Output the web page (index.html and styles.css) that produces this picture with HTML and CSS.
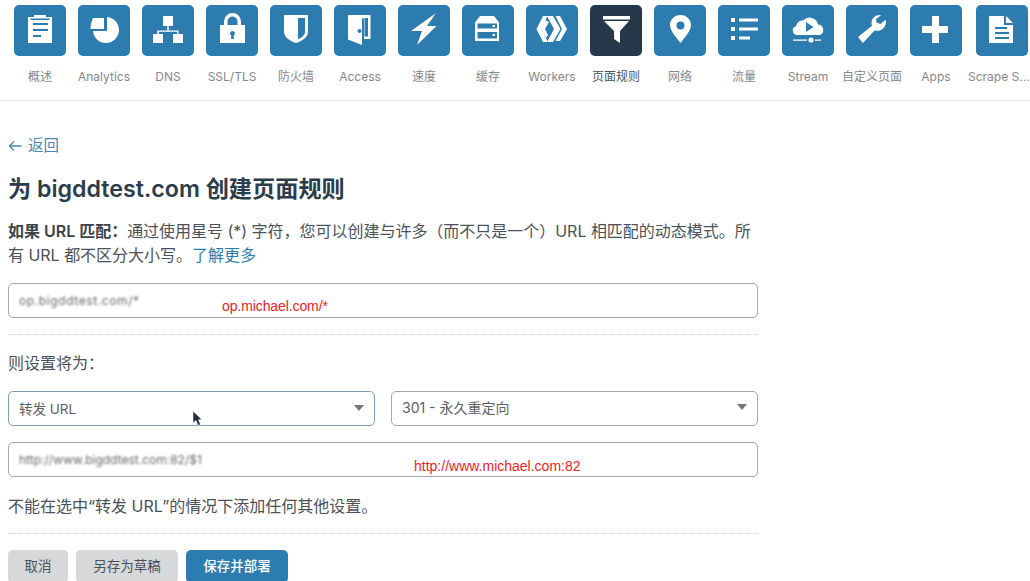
FILE: index.html
```html
<!DOCTYPE html>
<html lang="zh-CN">
<head>
<meta charset="utf-8">
<title>页面规则</title>
<link rel="stylesheet" href="styles.css">
</head>
<body>
<nav class="nav">
  <a class="tab"><span class="tile"><svg viewBox="0 0 52 51"><path class="w" d="M20 10h12v2h6v26H14V12h6z"/><path class="b" d="M16.500 13.500h19v1.500h-19zM19 18h15v2H19zM19 24h15v2H19zM19 30h8v2h-8z"/></svg></span><span class="lbl">概述</span></a>
  <a class="tab"><span class="tile"><svg viewBox="0 0 52 51"><path class="w" d="M15 13h11v11H12.500c0-4 1-8 2.500-11zM29 12a13 13 0 1 1-14 14h14z"/></svg></span><span class="lbl">Analytics</span></a>
  <a class="tab"><span class="tile"><svg viewBox="0 0 52 51"><path class="w" d="M21 11h10v10h-4.300v4.500H36.500V29H41v9H31v-9h4.200v-2.200H16.800V29H21v9H11v-9h4.200v-3.500h10.100V21H21z"/></svg></span><span class="lbl">DNS</span></a>
  <a class="tab"><span class="tile"><svg viewBox="0 0 52 51"><path class="w" d="M14 20h4v-3.500a8.500 8.500 0 0 1 17 0V20h4v18H14zM21.500 20h10v-3.500a5 5 0 0 0-10 0z"/><path class="b" d="M26.500 26a2.500 2.500 0 0 1 1.300 4.600V34h-2.600v-3.400a2.500 2.500 0 0 1 1.300-4.600z"/></svg></span><span class="lbl">SSL/TLS</span></a>
  <a class="tab"><span class="tile"><svg viewBox="0 0 52 51"><path class="w" d="M14 10h24v17c0 5-6 9-12 11-6-2-12-6-12-11z"/><path class="b" d="M28 13h7v14c0 3-3 5.500-7 7.300z"/></svg></span><span class="lbl">防火墙</span></a>
  <a class="tab"><span class="tile"><svg viewBox="0 0 52 51"><path class="w" d="M14 10h22.500v24H30V14l-2-1v27l-14-5.500z"/><path class="b" d="M30.500 13h3.500v18.500h-3.500z"/><circle class="b" cx="25.500" cy="26" r="2"/></svg></span><span class="lbl">Access</span></a>
  <a class="tab"><span class="tile"><svg viewBox="0 0 52 51"><path class="w" d="M38 8L29 21h9.500L19 40l5-14H13z"/></svg></span><span class="lbl">速度</span></a>
  <a class="tab"><span class="tile"><svg viewBox="0 0 52 51"><path class="w" d="M18 11h14l5 6.500V36H13V17.500z"/><path class="b" d="M15.500 18.500H35v5H15.500zM15.500 27H35v6.500H15.500z"/><path class="w" d="M30.500 20h2.500v2h-2.500zM30.500 29h2.500v2h-2.500z"/></svg></span><span class="lbl">缓存</span></a>
  <a class="tab"><span class="tile"><svg viewBox="0 0 52 51"><path class="w" d="M17 11h4.500L15 24l7 13h-5L10.500 24zM21 11h6l7.500 13L27 37h-6l7-13zM29.500 11H34l7 13-7 12h-4.500l6.500-12z"/><path class="w" d="M19 15l4 2-4 7 3 6-2 3-5-9z"/></svg></span><span class="lbl">Workers</span></a>
  <a class="tab on"><span class="tile"><svg viewBox="0 0 52 51"><path class="w" d="M13 11h27v3.500H13zM14 16h25l-9 10v12l-6-4v-8z"/></svg></span><span class="lbl">页面规则</span></a>
  <a class="tab"><span class="tile"><svg viewBox="0 0 52 51"><path class="w" d="M26.500 10c6 0 10.500 4.500 10.500 10 0 6-6 12-10.500 18C22 32 16 26 16 20c0-5.500 4.500-10 10.500-10zm0 6.500a4 4 0 1 0 0 8 4 4 0 0 0 0-8z"/></svg></span><span class="lbl">网络</span></a>
  <a class="tab"><span class="tile"><svg viewBox="0 0 52 51"><path class="w" d="M13 13h4v4h-4zM21 13.500h19v3H21zM13 22h4v4h-4zM21 22.500h19v3H21zM13 31h4v4h-4zM21 31.500h11v3H21z"/></svg></span><span class="lbl">流量</span></a>
  <a class="tab"><span class="tile"><svg viewBox="0 0 52 51"><path class="w" d="M15.500 30a4.500 4.500 0 0 1-1.500-8.800 7 7 0 0 1 7.500-6A8.500 8.500 0 0 1 36 19.500a5.500 5.500 0 0 1 2 10.500z"/><path class="b" d="M24 17l7.500 5-7.500 5z"/><path class="w" d="M11 34.500h14v1.200H11zM33 34.500h6v1.200h-6z"/><circle class="w" cx="29" cy="35" r="2.600"/></svg></span><span class="lbl">Stream</span></a>
  <a class="tab"><span class="tile"><svg viewBox="0 0 52 51"><path class="w" d="M34 10c-5 0-8.500 3.500-8.500 8 0 1 .2 2 .5 2.800L12 32l5 6 11.500-12.500c5.500 1.500 11.500-2.500 11.500-8.500 0-.8-.2-1.500-.5-2.200L34.500 19l-4-1.500-.5-3.500 5-3.500z"/></svg></span><span class="lbl">自定义页面</span></a>
  <a class="tab"><span class="tile"><svg viewBox="0 0 52 51"><path class="w" d="M22 11h7v10h9v7h-9v10h-7V28H12v-7h10z"/></svg></span><span class="lbl">Apps</span></a>
  <a class="tab"><span class="tile"><svg viewBox="0 0 52 51"><path class="w" d="M13 11h15v9h9v18H13z"/><path class="w" d="M30 11l7 7h-7z"/><path class="b" d="M19 22h12v2H19zM19 27h14v2H19zM19 32h14v2H19z"/></svg></span><span class="lbl">Scrape S...</span></a>
</nav>

<main class="main">
  <a class="back"><svg class="back-ico" viewBox="0 0 14 12"><path d="M6 1.500L1.500 6 6 10.500M1.500 6H13.500"/></svg>返回</a>
  <h1 class="title">为 bigddtest.com 创建页面规则</h1>
  <p class="intro"><strong>如果 URL 匹配：</strong>通过使用星号 (*) 字符，您可以创建与许多（而不只是一个）URL 相匹配的动态模式。所有 URL 都不区分大小写。<a class="link">了解更多</a></p>
  <div class="field"><span class="smudge s1">op.bigddtest.com/*</span><span class="mark m1">op.michael.com/*</span></div>
  <hr class="rule r1">
  <p class="then">则设置将为：</p>
  <div class="row">
    <div class="field sel focus"><span class="val">转发 URL</span><i class="arrow"></i></div>
    <div class="field sel second"><span class="val">301 - 永久重定向</span><i class="arrow"></i></div>
  </div>
  <div class="field f2"><span class="smudge s2">http://www.bigddtest.com:82/$1</span><span class="mark m2">http://www.michael.com:82</span></div>
  <p class="note">不能在选中“转发 URL”的情况下添加任何其他设置。</p>
  <hr class="rule r2">
  <div class="btns">
    <a class="btn grey b1">取消</a>
    <a class="btn grey b2">另存为草稿</a>
    <a class="btn blue b3">保存并部署</a>
  </div>
</main>
<svg class="cursor" viewBox="0 0 12 17"><path d="M1 1v12l3-2.500 2 5 2.500-1-2-4.700H10z"/></svg>
</body>
</html>
```
FILE: styles.css
```css
* { box-sizing: border-box; }
html, body { margin: 0; height: 581px; overflow: hidden; background: #fff; }
body { font-family: Inter, "Noto Sans CJK SC", sans-serif; color: #4a5158; position: relative; }
.nav { display: flex; height: 101px; padding: 5px 0 0 8px; border-bottom: 1px solid #e8e9ea; overflow: hidden; }
.tab { flex: 0 0 64px; display: flex; flex-direction: column; align-items: center; }
.tile { width: 52px; height: 51px; border-radius: 5px; background: #2c7cb0; display: block; }
.tile svg { display: block; width: 52px; height: 51px; }
.w { fill: #fff; fill-rule: evenodd; }
.b { fill: #2c7cb0; }
.lbl { margin-top: 13px; font-size: 12px; line-height: 16px; color: #85888b; white-space: nowrap; }
.tab:last-child .lbl { margin-right: 6px; }
.on .tile { background: #24384a; }
.on .b { fill: #24384a; }
.on .lbl { color: #4a5158; }
.main { width: 750px; margin-left: 8px; }
.back { display: flex; align-items: center; gap: 6px; margin-top: 35px; font-size: 15.500px; line-height: 20px; color: #4a86b4; }
.back-ico { width: 14px; height: 12px; fill: none; stroke: #4a86b4; stroke-width: 1.3; }
.title { margin: 18px 0 0; font-size: 23.200px; line-height: 30px; font-weight: 600; color: #2b3c4b; }
.intro { margin: 16px 0 0; font-size: 16px; line-height: 23.500px; color: #4a5158; letter-spacing: -.02px; }
.intro strong { font-weight: 600; color: #3c4349; }
.link { color: #2c7cb0; }
.field { position: relative; height: 35px; margin-top: 16px; padding: 0 10px; display: flex; align-items: center; border: 1px solid #a3a8ad; border-radius: 5px; font-size: 13.500px; color: #5c6065; }
.smudge { filter: blur(1.2px); color: #666; font-size: 12px; letter-spacing: .6px; white-space: nowrap; }
.s2 { letter-spacing: 0; }
.mark { position: absolute; color: #ee1c25; font-family: "Liberation Sans", sans-serif; font-size: 14px; line-height: 16px; white-space: nowrap; letter-spacing: -.1px; }
.m1 { left: 213px; top: 14px; }
.m2 { left: 405px; top: 15px; letter-spacing: 0; }
.rule { height: 0; border: 0; border-top: 1px dotted #cfd1d3; }
.r1 { margin: 16px 0 0; }
.then { margin: 18px 0 0; font-size: 16px; line-height: 20px; }
.row { display: flex; gap: 16px; margin-top: 18px; }
.row .field { flex: 1; margin-top: 0; }
.sel { justify-content: space-between; padding-bottom: 2px; }
.second { font-size: 14px; padding-bottom: 3px; }
.focus { border-color: #7d9fbb; }
.arrow { width: 0; height: 0; border: 5px solid transparent; border-top: 6px solid #74787c; border-bottom: 0; }
.note { margin: 19px 0 0; font-size: 16px; line-height: 20px; }
.r2 { margin: 17px 0 0; }
.btns { display: flex; gap: 8px; margin-top: 16px; }
.btn { height: 33px; display: flex; align-items: center; justify-content: center; border-radius: 5px; font-size: 13.500px; padding-bottom: 3px; }
.grey { background: #d6d8d9; color: #4a5158; }
.blue { background: #2c7cb0; color: #fff; font-weight: 500; }
.b1 { width: 60px; }
.b2 { width: 102px; }
.b3 { width: 102px; }
.cursor { position: absolute; left: 192px; top: 410px; width: 12px; height: 17px; }
.cursor path { fill: #1f2d3a; stroke: #fff; stroke-width: .6; }
```
